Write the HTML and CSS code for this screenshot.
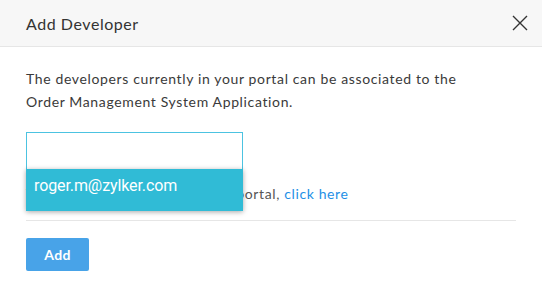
FILE: index.html
```html
<!DOCTYPE html>
<html>
<head>
<meta charset="utf-8">
<link rel="stylesheet" href="styles.css">
</head>
<body>
<div class="dialog">
  <div class="header">
    <span class="title">Add Developer</span>
    <svg class="close" width="16" height="16" viewBox="0 0 16 16"><path d="M1 1L15 15M15 1L1 15" stroke="#333" stroke-width="1.4" fill="none"/></svg>
  </div>
  <div class="body">
    <p class="desc">The developers currently in your portal can be associated to the Order Management System Application.</p>
    <div class="field">
      <div class="input"></div>
      <div class="dropdown"><div class="option">roger.m@zylker.com</div></div>
    </div>
    <p class="hint">To add new developers to your portal, <a class="link">click here</a></p>
    <div class="divider"></div>
    <button class="btn">Add</button>
  </div>
</div>
</body>
</html>
```
FILE: styles.css
```css
* { box-sizing: border-box; }
html, body { margin: 0; padding: 0; background: #fff; }
body { font-family: "Lato", "Open Sans", sans-serif; color: #333; width: 542px; height: 295px; overflow: hidden; }
.header {
  height: 47px;
  background: #f7f7f7;
  border-bottom: 1px solid #e6e6e6;
  display: flex;
  align-items: center;
  justify-content: space-between;
  padding: 0 14px 0 26px;
}
.title { font-size: 16px; color: #333; letter-spacing: 0.55px; }
.close { display: block; }
.body { padding: 0 26px; }
.desc { margin: 20px 0 0; font-size: 14px; line-height: 23px; color: #3a3a3a; letter-spacing: 0.64px; width: 465px; }
.field { position: relative; margin-top: 19px; width: 217px; }
.input { height: 38px; border: 1px solid #4cc3e1; background: #fff; }
.dropdown {
  position: absolute; left: 0; top: 37px; width: 217px;
  background: #30bbd6;
  box-shadow: 0 1px 5px rgba(0,0,0,0.35);
  z-index: 2;
}
.option { height: 42px; padding: 6px 8px 0; color: #fff; font-family: "Roboto", sans-serif; font-size: 16px; line-height: 22px; letter-spacing: -0.1px; }
.hint { margin: 14px 0 0; font-size: 14px; line-height: 20px; color: #555; letter-spacing: 0.62px; }
.link { color: #1e8fe6; }
.divider { margin-top: 16px; height: 1px; background: #e6e6e6; }
.btn {
  margin-top: 17px;
  width: 63px; height: 33px;
  border: 0; border-radius: 2px;
  background: #48a3e8; color: #fff;
  font-family: "Lato", sans-serif; font-size: 14px; font-weight: 700; letter-spacing: 0.3px;
}
```
